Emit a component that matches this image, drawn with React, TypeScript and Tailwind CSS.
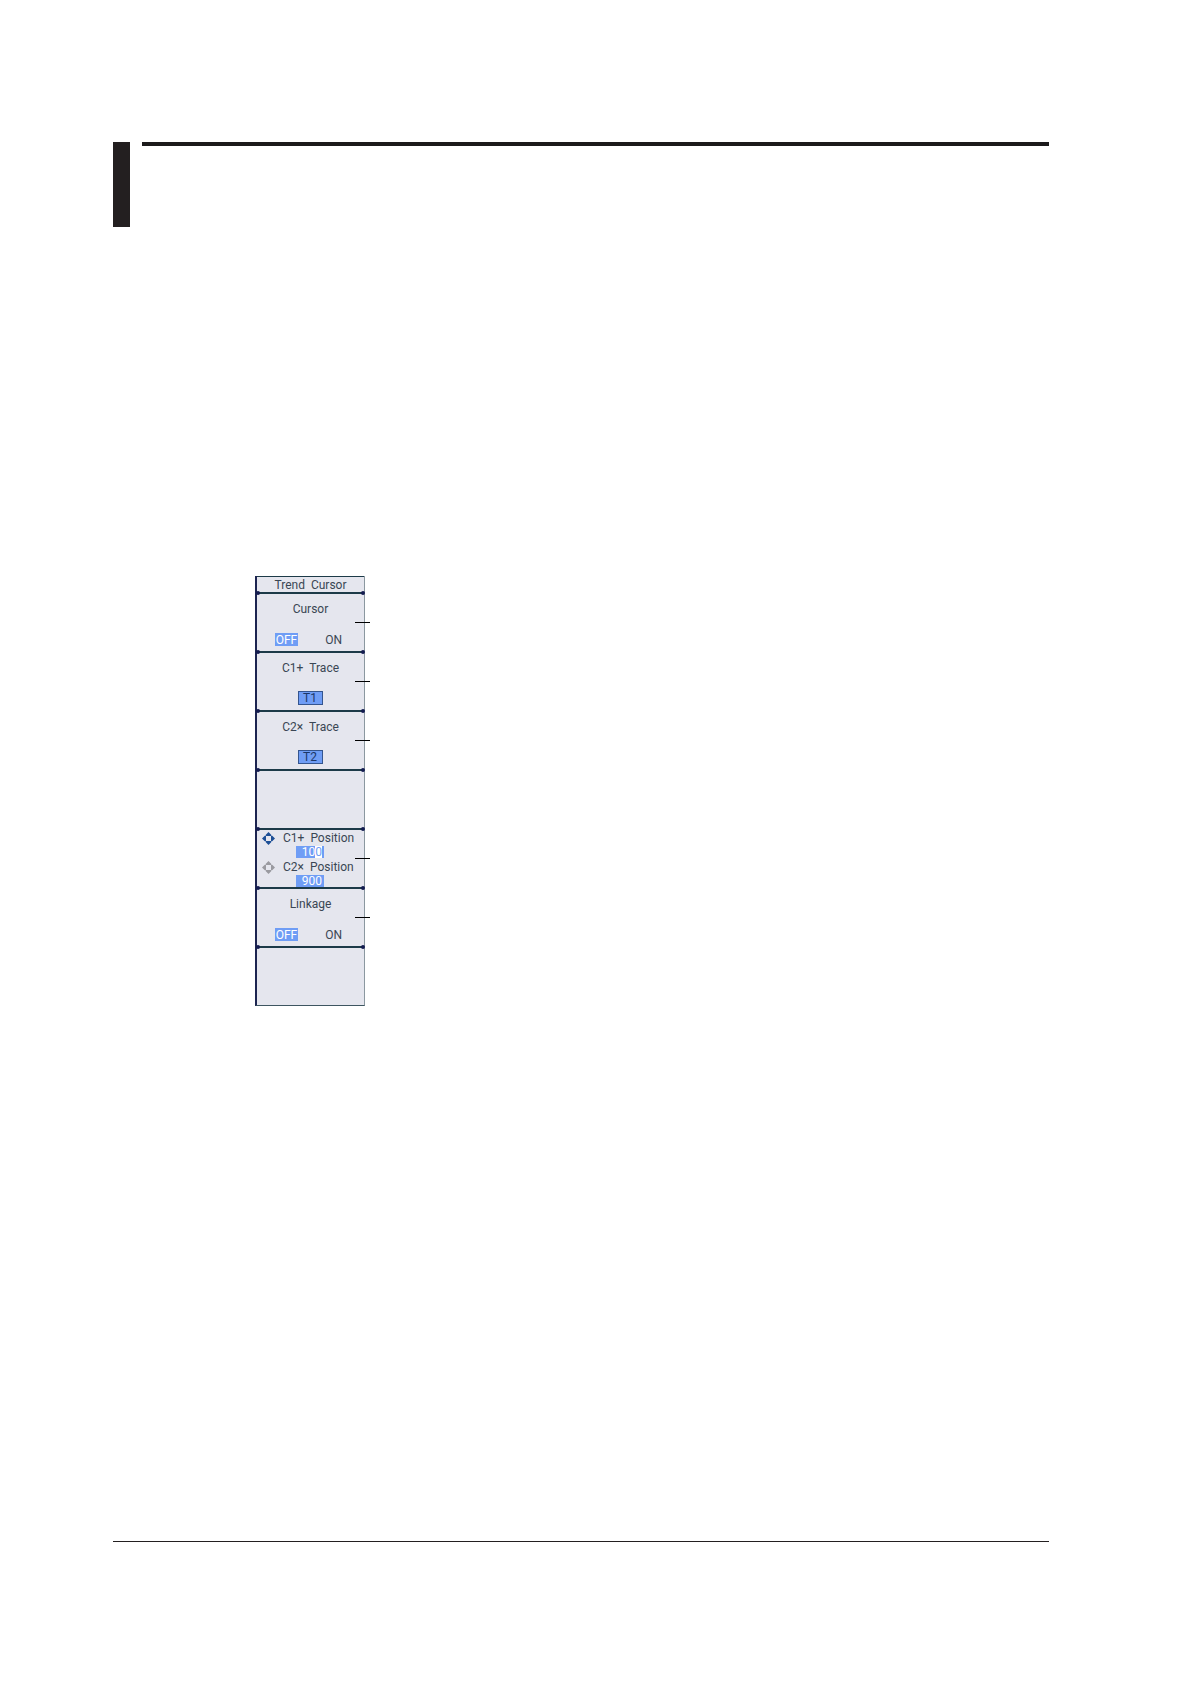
import type { ReactNode } from "react";

function Cell({ children, leader = false }: { children?: ReactNode; leader?: boolean }) {
  return (
    <div className="relative h-[59px] border-t-2 border-[#1c3a48]">
      <Corners />
      {children}
      {leader && <span className="absolute top-[28px] -right-[6px] h-px w-[15px] bg-black" />}
    </div>
  );
}

function Corners() {
  return (
    <>
      <span className="absolute -top-[3px] -left-px size-1 rounded-full bg-[#141c50]" />
      <span className="absolute -top-[3px] -right-px size-1 rounded-full bg-[#141c50]" />
    </>
  );
}

function Label({ words }: { words: string[] }) {
  return (
    <span className="flex justify-center gap-1.5 whitespace-nowrap">
      {words.map((w) => (
        <span key={w}>{w}</span>
      ))}
    </span>
  );
}

function Toggle({ name }: { name: string }) {
  return (
    <fieldset aria-label={name} className="pt-[7px]">
      <Label words={[name]} />
      <div className="flex justify-between pt-4 pr-[22px] pl-[18px]">
        <label className="flex h-[13px] w-[23px] items-center justify-center bg-[#6f9df5] text-white">
          <input type="radio" name={name} defaultChecked className="sr-only" />
          OFF
        </label>
        <label className="flex h-[13px] items-center">
          <input type="radio" name={name} className="sr-only" />
          ON
        </label>
      </div>
    </fieldset>
  );
}

function Trace({ axis, value }: { axis: string; value: string }) {
  return (
    <button type="button" className="flex w-full flex-col items-center gap-[15px] pt-[7px]">
      <Label words={[axis, "Trace"]} />
      <span className="flex h-[14px] w-[25px] items-center border border-[#34558f] bg-[#6f9df5] pl-1 text-[#1b3768]">
        {value}
      </span>
    </button>
  );
}

function Arrows({ className }: { className: string }) {
  return (
    <svg viewBox="0 0 13 13" className={"size-[13px] shrink-0 " + className} fill="currentColor" aria-hidden="true">
      <path d="M6.5 0 9.2 2.8V4H3.8V2.8ZM6.5 13 3.8 10.2V9H9.2V10.2ZM0 6.5 2.8 3.8H4V9.2H2.8ZM13 6.5 10.2 9.2H9V3.8H10.2Z" />
    </svg>
  );
}

function Position({ axis, value, active = false }: { axis: string; value: string; active?: boolean }) {
  return (
    <label className="block">
      <span className="flex h-4 items-center gap-2 pl-[5px]">
        <Arrows className={active ? "text-[#1d4f96]" : "text-[#9a9aa0]"} />
        <Label words={[axis, "Position"]} />
      </span>
      <span className="relative ml-[39px] block h-[13px] w-7">
        <input
          defaultValue={value}
          className="block h-3 w-7 bg-[#6f9df5] pr-0.5 text-right leading-3 text-white outline-none"
        />
        {active && (
          <span aria-hidden="true" className="absolute top-0 right-0.5 h-3 bg-white leading-3 text-[#6f9df5]">
            {value.slice(-1)}
          </span>
        )}
      </span>
    </label>
  );
}

export default function App() {
  return (
    <div className="flex min-h-screen flex-col bg-white pt-[142px] pr-[142px] pb-[142px] pl-[113px]">
      <header className="flex gap-3">
        <div className="h-[85px] w-[17px] bg-[#231f20]" />
        <div className="h-1 flex-1 bg-[#1c1a1b]" />
      </header>
      <main className="flex-1 pt-[349px] pl-[142px]">
        <section className="w-[110px] border-r border-b border-l-2 border-r-[#8b98a0] border-b-[#3d5560] border-l-[#1c2450] bg-[#e5e6ee] font-[Roboto,sans-serif] text-xs leading-4 text-[#3a4654]">
          <h1 className="h-4 border-t border-[#1c3a48]">
            <Label words={["Trend", "Cursor"]} />
          </h1>
          <Cell leader>
            <Toggle name="Cursor" />
          </Cell>
          <Cell leader>
            <Trace axis="C1+" value="T1" />
          </Cell>
          <Cell leader>
            <Trace axis="C2×" value="T2" />
          </Cell>
          <Cell />
          <Cell leader>
            <Position axis="C1+" value="100" active />
            <Position axis="C2×" value="900" />
          </Cell>
          <Cell leader>
            <Toggle name="Linkage" />
          </Cell>
          <Cell />
        </section>
      </main>
      <footer className="border-t border-[#231f20]" />
    </div>
  );
}
